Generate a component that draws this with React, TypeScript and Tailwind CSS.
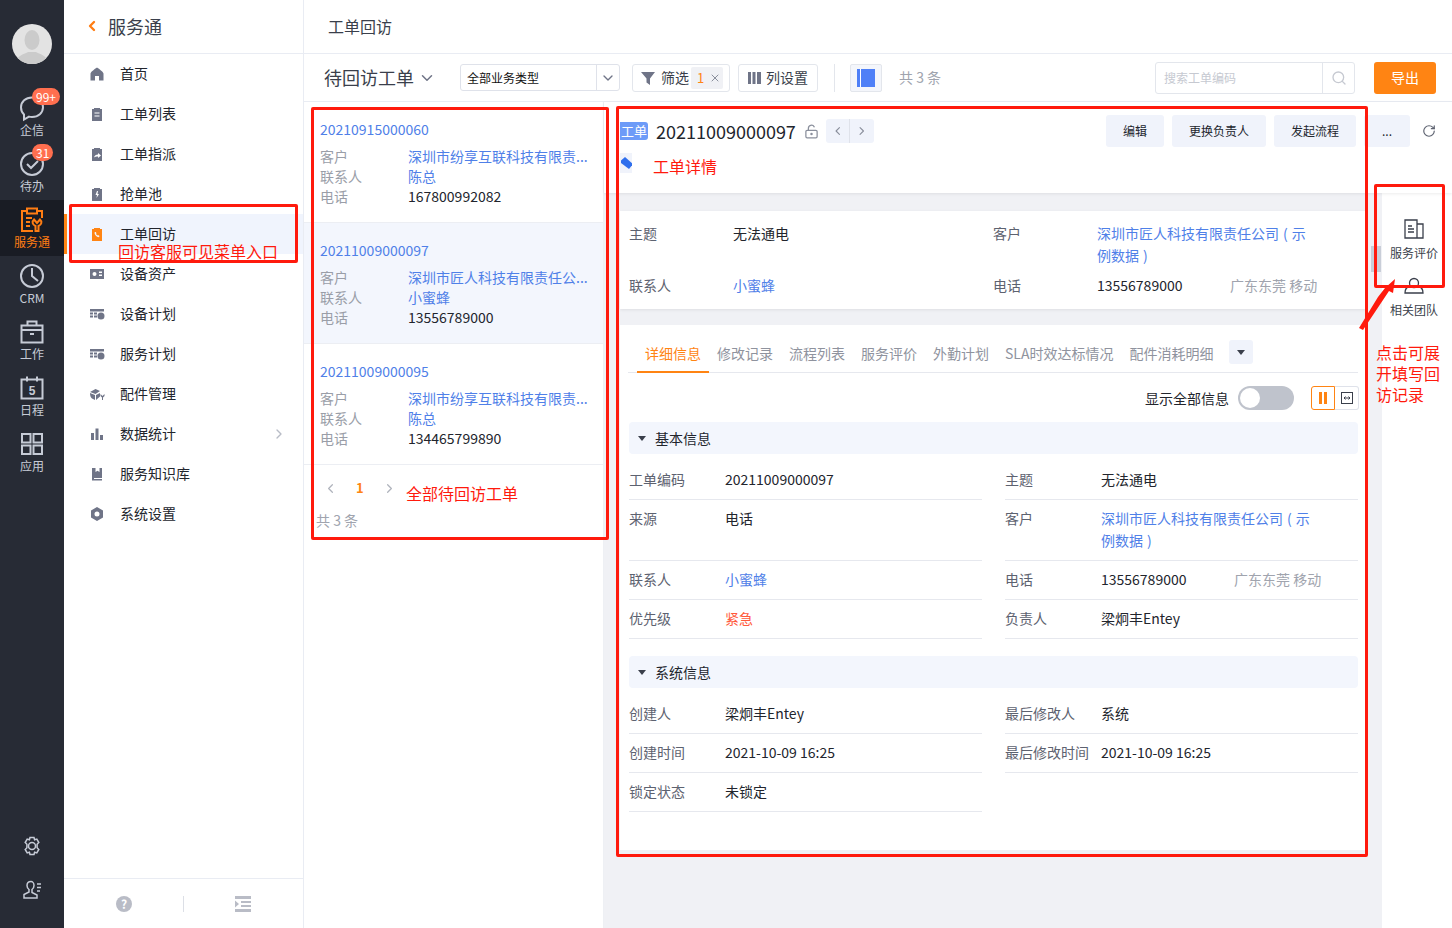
import React from 'react';
import { ChevronDown, ChevronLeft, ChevronRight, Search, RotateCw, LockKeyholeOpen, X } from 'lucide-react';

const railItems = [
  { label: '企信', icon: 'chat', badge: '99+' },
  { label: '待办', icon: 'todo', badge: '31' },
  { label: '服务通', icon: 'service', active: true },
  { label: 'CRM', icon: 'crm' },
  { label: '工作', icon: 'work' },
  { label: '日程', icon: 'date' },
  { label: '应用', icon: 'apps' },
];

function RailIcon({ name, color }: { name: string; color: string }) {
  const p = { fill: 'none', stroke: color, strokeWidth: 2 };
  return (
    <svg width="28" height="28" viewBox="0 0 28 28">
      {name === 'chat' && <path d="M14 3.500c6.400 0 11 4.300 11 9.800s-4.600 9.700-11 9.700c-1 0-2-.1-3-.4L6 25.500v-5C4 18.700 3 16.200 3 13.300 3 7.800 7.600 3.500 14 3.500z" {...p} />}
      {name === 'todo' && <g {...p}><circle cx="14" cy="14" r="11" /><path d="M9 14l4 4 7-7" /></g>}
      {name === 'service' && (
        <g {...p}>
          <path d="M9 5H4v20h11M19 5h5v7" />
          <rect x="9" y="2.500" width="10" height="5" />
          <path d="M8 12h6M8 16h4M8 20h4" />
          <path d="M16 13.500l3 3.500 3-3.500c2.500 2 1.500 5.500-1.500 6.500v5h-3v-5c-3-1-4-4.500-1.500-6.500z" />
        </g>
      )}
      {name === 'crm' && <g {...p}><circle cx="14" cy="14" r="11" /><path d="M14 6v8l6 5" /></g>}
      {name === 'work' && <g {...p}><rect x="3.500" y="7.500" width="21" height="17" /><path d="M9.500 7.500V3.500h9v4M3.500 12h21M12 16h4" /></g>}
      {name === 'date' && (
        <g {...p}>
          <rect x="3.500" y="5.500" width="21" height="19" />
          <path d="M9 2.500v5M19 2.500v5" />
          <text x="14" y="21" textAnchor="middle" fontSize="12" fontWeight="700" fill={color} stroke="none" fontFamily="Liberation Sans">5</text>
        </g>
      )}
      {name === 'apps' && (
        <g {...p}>
          <rect x="4" y="4" width="8.500" height="8.500" />
          <rect x="15.500" y="4" width="8.500" height="8.500" />
          <rect x="4" y="15.500" width="8.500" height="8.500" />
          <rect x="15.500" y="15.500" width="8.500" height="8.500" />
        </g>
      )}
    </svg>
  );
}

function MenuIcon({ name, color = '#6f7487' }: { name: string; color?: string }) {
  return (
    <svg width="16" height="16" viewBox="0 0 16 16" fill={color}>
      {name === 'home' && <path d="M8 1.500c1.500 1 6 4 6.500 6v7H10V10H6v4.500H1.500v-7C2 5.500 6.500 2.500 8 1.500z" />}
      {name === 'list' && <path fillRule="evenodd" d="M3 3h2V2h6v1h2v12H3zM5.500 6.500v1h5v-1zm0 3v1h5v-1z" />}
      {name === 'assign' && <path fillRule="evenodd" d="M3 3h2V2h6v1h2v12H3zM5 11.500c.5-2 2-3 4-3V7l3 2.500L9 12v-1.500c-1.500 0-3 0-4 1z" />}
      {name === 'pool' && <path fillRule="evenodd" d="M3 3h2V2h6v1h2v12H3zM8 5L6.500 9H8l-.5 3L10 8H8.500L9 5z" />}
      {name === 'visit' && <path fillRule="evenodd" d="M3 3h2V2h6v1h2v12H3zM6 6c-.8.500-.5 2 .5 3.300S9 11.500 10 11l.5-1-1.500-1-.7.500-1.300-1.500.5-.8L6.800 6z" />}
      {name === 'asset' && <path fillRule="evenodd" d="M1 3h14v10H1zM5.500 6a2 2 0 100 4 2 2 0 000-4zM10 5.500v1.500h3V5.500zm0 3v1.500h3V8.500z" />}
      {name === 'plan' && <path fillRule="evenodd" d="M1 3h14v2.500H1zM1 6.500h3v2H1zM5 6.500h3v2H5zM1 9.500h3v2H1zM5 9.500h3v2H5zM12 6.500a3.500 3.500 0 110 7 3.500 3.500 0 010-7z" />}
      {name === 'part' && <path d="M1 6l5.500-3L11 5 6.500 8zM1 7l5 2v5l-3-1.500C1.500 11.500 1 9 1 7zM7 9l4-2v3.500L7 14zM11.500 8l2 2 2-2v2l-1.500 1.500V14h-1v-2.500L11.500 10z" />}
      {name === 'stat' && <path d="M2 7h3v7H2zM6.500 2.500h3V14h-3zM11 9h3v5h-3z" />}
      {name === 'book' && <path d="M3 2h10v10H5v1h8v1.500H3zM6.500 2v4l2-1.200L10.500 6V2z" />}
      {name === 'gear' && <path fillRule="evenodd" d="M8 1l6 3.500v7L8 15l-6-3.500v-7zM8 5.500a2.500 2.500 0 100 5 2.500 2.500 0 000-5z" />}
    </svg>
  );
}

const menu = [
  { label: '首页', icon: 'home' },
  { label: '工单列表', icon: 'list' },
  { label: '工单指派', icon: 'assign' },
  { label: '抢单池', icon: 'pool' },
  { label: '工单回访', icon: 'visit', active: true },
  { label: '设备资产', icon: 'asset' },
  { label: '设备计划', icon: 'plan' },
  { label: '服务计划', icon: 'plan' },
  { label: '配件管理', icon: 'part' },
  { label: '数据统计', icon: 'stat', more: true },
  { label: '服务知识库', icon: 'book' },
  { label: '系统设置', icon: 'gear' },
];

const orders = [
  { no: '20210915000060', customer: '深圳市纷享互联科技有限责...', contact: '陈总', phone: '167800992082' },
  { no: '20211009000097', customer: '深圳市匠人科技有限责任公...', contact: '小蜜蜂', phone: '13556789000', active: true },
  { no: '20211009000095', customer: '深圳市纷享互联科技有限责...', contact: '陈总', phone: '134465799890' },
];

const tabs = ['修改记录', '流程列表', '服务评价', '外勤计划', 'SLA时效达标情况', '配件消耗明细'];

// hair spaces around the brackets, the source renders them wider than a plain space
const customerName = '深圳市匠人科技有限责任公司 \u200a( \u200a示例数据 \u200a)';

function Sidebar() {
  return (
    <div className="w-[64px] shrink-0 bg-[#272b35] flex flex-col items-center">
      <div className="mt-[24px] mb-[24px] w-[40px] h-[40px] rounded-full bg-[#e3e3e3] overflow-hidden">
        <svg width="40" height="40" viewBox="0 0 40 40">
          <ellipse cx="20" cy="16" rx="7.500" ry="10" fill="#cbcbcb" />
          <path d="M4 40c0-9 9-10 12-12h8c3 2 12 3 12 12z" fill="#cbcbcb" />
        </svg>
      </div>
      <div className="flex flex-col w-full">
        {railItems.map((item) => (
          <div
            key={item.label}
            className={`relative h-[56px] pb-[2px] flex flex-col items-center justify-center ${item.active ? 'bg-[#191c24]' : ''}`}
          >
            <div className="mb-[1px]"><RailIcon name={item.icon} color={item.active ? '#ff7d13' : '#c6cbd6'} /></div>
            <span className={`text-[12px] leading-[14px] ${item.active ? 'text-[#ff7d13]' : 'text-[#c6cbd6]'}`}>{item.label}</span>
            {item.badge && (
              <span className="absolute top-0 left-[32px] h-[17px] px-[4px] min-w-[17px] text-center rounded-full bg-[#ff6f4f] text-white text-[12px] leading-[17px]">
                {item.badge}
              </span>
            )}
          </div>
        ))}
      </div>
      <div className="mt-auto flex flex-col items-center gap-[24px] mb-[28px] text-[#c6cbd6]">
        <svg width="20" height="20" viewBox="0 0 20 20" fill="none" stroke="currentColor" strokeWidth="1.500">
          <path d="M8 1.500h4l.6 2.300 2.200-.7 2 3.400-1.700 1.700v3.600l1.700 1.700-2 3.400-2.200-.7-.6 2.300H8l-.6-2.300-2.200.7-2-3.400 1.700-1.700V8.200L3.200 6.500l2-3.400 2.200.7z" />
          <circle cx="10" cy="10" r="3.500" />
        </svg>
        <svg width="20" height="20" viewBox="0 0 20 20" fill="none" stroke="currentColor" strokeWidth="1.500">
          <path d="M9 1.500c-2.500 0-4 1.800-4 4 0 2 1 3.300 2 4v2.500l-5 2.500v3.500h13V15l-5-2.500V9.500c1-.7 2-2 2-4 0-2.200-1.500-4-3-4z" />
          <path d="M15 4h4M15 7.500h4M15 11h3" />
        </svg>
      </div>
    </div>
  );
}

function SubMenu() {
  return (
    <div className="relative w-[240px] shrink-0 bg-white border-r border-[#e9ecf3] flex flex-col">
      <div className="h-[54px] shrink-0 flex items-center pl-[20px] pb-[1px] border-b border-[#e9ecf3]">
        <ChevronLeft size={16} strokeWidth={3.500} className="text-[#ff7d13]" />
        <span className="ml-[8px] text-[18px] text-[#3a3f4b]">服务通</span>
      </div>
      <div className="flex flex-col">
        {menu.map((m) => (
          <div key={m.label} className={`relative h-[40px] flex items-center pl-[25px] pr-[16px] ${m.active ? 'bg-[#f0f4fd]' : ''}`}>
            {m.active && <span className="absolute left-0 top-0 w-[3px] h-full bg-[#ff8413]" />}
            <MenuIcon name={m.icon} color={m.active ? '#ff8413' : '#6f7487'} />
            <span className="ml-[15px] text-[14px] leading-[20px] mb-[3px] text-[#22252d]">{m.label}</span>
            {m.more && <ChevronRight size={16} className="ml-auto text-[#b8bcc6]" />}
          </div>
        ))}
      </div>
      <div className="mt-auto h-[50px] border-t border-[#e9ecf3] flex items-center justify-center">
        <div className="w-[16px] h-[16px] rounded-full bg-[#b9bcc6] text-white text-[12px] leading-[16px] text-center font-bold">?</div>
        <div className="mx-[51px] w-px h-[16px] bg-[#dcdfe6]" />
        <svg width="16" height="16" viewBox="0 0 16 16" fill="#b9bcc6">
          <path d="M0 0h16v3H0zM0 13h16v3H0zM6 5h10v2H6zM6 9h10v2H6zM0 4.500L4 8l-4 3.500z" />
        </svg>
      </div>
    </div>
  );
}

function Toolbar() {
  return (
    <div className="h-[48px] shrink-0 flex items-center bg-white border-b border-[#e9ecf3] pl-[20px] pr-[16px]">
      <span className="text-[18px] text-[#3a3f4b]">待回访工单</span>
      <ChevronDown size={18} className="ml-[4px] text-[#6f7487]" />
      <div className="ml-[24px] w-[160px] h-[27px] border border-[#dfe2ea] rounded-[3px] flex items-center">
        <span className="flex-1 pl-[6px] text-[12px] text-[#111]">全部业务类型</span>
        <div className="w-[22px] h-full border-l border-[#dfe2ea] flex items-center justify-center shrink-0 ml-[4px] mr-[1px]">
          <ChevronDown size={16} className="text-[#6f7487]" />
        </div>
      </div>
      <div className="ml-[12px] w-[98px] h-[28px] border border-[#e3e6ec] rounded-[3px] flex items-center pl-[8px] text-[14px] text-[#3a3f4b]">
        <svg width="14" height="14" viewBox="0 0 14 14" fill="#6f7487"><path d="M0 1h14L9 7.500V14L5.500 11.500V7.500z" /></svg>
        <span className="ml-[6px]">筛选</span>
        <span className="ml-[2px] h-[22px] pl-[6px] pr-[2px] bg-[#f0f1f5] rounded-[2px] flex items-center text-[13px] text-[#ff8413]">
          1<X size={12} className="ml-[5px] text-[#8a8f9c]" />
        </span>
      </div>
      <div className="ml-[8px] w-[80px] h-[28px] border border-[#e3e6ec] rounded-[3px] flex items-center justify-center text-[14px] text-[#3a3f4b]">
        <svg width="14" height="14" viewBox="0 0 14 14" fill="#6f7487"><path d="M0 1h3v12H0zM4.500 1h3v12h-3zM9 1h4v12H9z" /></svg>
        <span className="ml-[4px]">列设置</span>
      </div>
      <div className="ml-[16px] mr-[15px] w-px h-[28px] bg-[#e3e6ec]" />
      <div className="w-[32px] h-[28px] border border-[#e3e6ec] rounded-[2px] bg-[#f4f6fb] flex items-center justify-center">
        <svg width="18" height="18" viewBox="0 0 18 18"><rect width="18" height="18" fill="#4f80f7" /><rect x="3" width="1" height="18" fill="#fff" /></svg>
      </div>
      <span className="ml-[17px] text-[14px] text-[#a0a4ae]">共 3 条</span>
      <div className="ml-auto w-[200px] h-[32px] border border-[#e3e6ec] rounded-[3px] flex items-center">
        <span className="flex-1 pl-[8px] text-[12px] text-[#c6c9d1]">搜索工单编码</span>
        <div className="w-[32px] h-full border-l border-[#e3e6ec] flex items-center justify-center">
          <Search size={16} className="text-[#c6c9d1]" />
        </div>
      </div>
      <button className="ml-[19px] w-[62px] h-[32px] rounded-[3px] bg-[#ff8413] text-white text-[14px]">导出</button>
    </div>
  );
}

function OrderList() {
  return (
    <div className="w-[300px] shrink-0 bg-white border-r border-[#eef0f4]">
      {orders.map((o) => (
        <div key={o.no} className={`h-[121px] pt-[17px] pl-[16px] pr-[16px] border-b border-[#eceef3] ${o.active ? 'bg-[#f3f6fd]' : ''}`}>
          <div className="text-[14px] leading-[20px] text-[#4f80e8]">{o.no}</div>
          <div className="mt-[7px] text-[14px] leading-[20px]">
            <div className="flex"><span className="w-[88px] shrink-0 text-[#9a9ea8]">客户</span><span className="whitespace-nowrap text-[#4f80e8]">{o.customer}</span></div>
            <div className="flex"><span className="w-[88px] shrink-0 text-[#9a9ea8]">联系人</span><span className="text-[#4f80e8]">{o.contact}</span></div>
            <div className="flex"><span className="w-[88px] shrink-0 text-[#9a9ea8]">电话</span><span className="text-[#22252d]">{o.phone}</span></div>
          </div>
        </div>
      ))}
      <div className="flex items-center h-[46px] pl-[19px] text-[#b0b4bd]">
        <ChevronLeft size={15} />
        <span className="ml-[18px] text-[13px] font-bold text-[#ff8413]">1</span>
        <ChevronRight size={15} className="ml-[18px]" />
      </div>
      <div className="pl-[12px] mt-[-1px] text-[14px] text-[#a0a4ae]">共 3 条</div>
    </div>
  );
}

function Row({ label, children, h = 'h-[39px]' }: { label: string; children: React.ReactNode; h?: string }) {
  return (
    <div className={`${h} pt-[7px] border-b border-[#e6e8ee]`}>
      <div className="flex text-[14px] leading-[22px]">
        <span className="w-[96px] shrink-0 text-[#5d6270]">{label}</span>
        <div className="flex-1 text-[#22252d]">{children}</div>
      </div>
    </div>
  );
}

function SectionTitle({ title }: { title: string }) {
  return (
    <div className="h-[32px] rounded-[4px] bg-[#f3f6fd] flex items-center pl-[9px] text-[14px] text-[#22252d]">
      <span className="w-0 h-0 border-x-[4px] border-x-transparent border-t-[5px] border-t-[#3a3f4b]" />
      <span className="ml-[9px]">{title}</span>
    </div>
  );
}

function Detail() {
  return (
    <div className="flex-1 min-w-0 flex flex-col bg-[#f0f1f5]">
      <div className="h-[91px] shrink-0 bg-white flex shadow-[0_1px_3px_rgba(0,0,0,0.08)] z-10">
        <div className="flex-1 pl-[16px] pt-[17px] pr-[12px] flex flex-col">
          <div className="flex items-center h-[24px]">
            <span className="w-[28px] h-[18px] rounded-r-[3px] bg-[#6d9bf8] text-white text-[13px] leading-[18px] text-center">工单</span>
            <span className="ml-[8px] text-[18px] text-[#22252d]">20211009000097</span>
            <LockKeyholeOpen size={15} className="ml-[8px] text-[#8a8f9c]" />
            <div className="ml-[7px] w-[48px] h-[24px] rounded-[3px] bg-[#f0f3fb] flex items-center text-[#8a8f9c]">
              <ChevronLeft size={14} className="mx-[5px]" />
              <span className="w-px h-[24px] bg-[#dfe2ea]" />
              <ChevronRight size={14} className="mx-[5px]" />
            </div>
            <div className="ml-auto flex gap-[8px] text-[12px] text-[#22252d]">
              <span className="h-[32px] w-[58px] rounded-[3px] bg-[#f0f3fb] flex items-center justify-center">编辑</span>
              <span className="h-[32px] w-[94px] rounded-[3px] bg-[#f0f3fb] flex items-center justify-center">更换负责人</span>
              <span className="h-[32px] w-[82px] rounded-[3px] bg-[#f0f3fb] flex items-center justify-center">发起流程</span>
              <span className="h-[32px] w-[46px] rounded-[3px] bg-[#f0f3fb] flex items-center justify-center">...</span>
              <span className="h-[32px] w-[22px] flex items-center justify-center"><RotateCw size={14} className="text-[#5d6270]" /></span>
            </div>
          </div>
          <div className="mt-[10px] w-[12px] h-[20px] bg-[#f0f3fb] flex items-center overflow-hidden">
            <svg className="shrink-0" width="14" height="14" viewBox="0 0 14 14" fill="#2f6fed"><path d="M1 4.500L5 1l8 7-4 5-8-6z" /></svg>
          </div>
        </div>
      </div>
      <div className="flex flex-1 min-h-0">
        <div className="flex-1 min-w-0 pt-[18px] pl-[16px] pr-[16px]">
          <div className="h-[98px] bg-white shadow-[0_1px_3px_rgba(0,0,0,0.08)] pl-[9px] pt-[11px] grid grid-cols-[364px_1fr] content-start text-[14px] leading-[22px]">
            <div className="flex"><span className="w-[104px] text-[#5d6270]">主题</span><span className="text-[#22252d]">无法通电</span></div>
            <div className="flex"><span className="w-[104px] shrink-0 text-[#5d6270]">客户</span><span className="w-[216px] text-[#4f80e8]">{customerName}</span></div>
            <div className="flex mt-[8px]"><span className="w-[104px] text-[#5d6270]">联系人</span><span className="text-[#4f80e8]">小蜜蜂</span></div>
            <div className="flex mt-[8px]"><span className="w-[104px] text-[#5d6270]">电话</span><span className="w-[133px] text-[#22252d]">13556789000</span><span className="text-[#a0a4ae]">广东东莞 移动</span></div>
          </div>
          <div className="mt-[16px] h-[525px] bg-white pl-[9px] pr-[8px] pt-[15px]">
            <div className="flex items-start h-[33px] border-b border-[#e6e8ee] text-[14px] leading-[27px] text-[#8f939e] ml-[-1px]">
              <span className="h-[33px] w-[72px] ml-[9px] text-center text-[#ff8413] border-b-2 border-[#ff8413]">详细信息</span>
              <div className="flex gap-[16px] ml-[8px]">
                {tabs.map((t) => <span key={t} className="whitespace-nowrap">{t}</span>)}
              </div>
              <span className="ml-[15px] w-[24px] h-[24px] rounded-[3px] bg-[#f0f3fb] flex items-center justify-center">
                <span className="w-0 h-0 border-x-[4px] border-x-transparent border-t-[5px] border-t-[#3a3f4b]" />
              </span>
            </div>
            <div className="flex items-center justify-end h-[24px] mt-[13px] mr-[-1px] text-[14px] text-[#22252d]">
              <span>显示全部信息</span>
              <span className="ml-[9px] w-[56px] h-[24px] rounded-full bg-[#bfc3cc] p-[2px]"><span className="block w-[20px] h-[20px] rounded-full bg-white" /></span>
              <span className="ml-[17px] w-[24px] h-[24px] border border-[#ff8413] rounded-l-[3px] flex items-center justify-center gap-[2px]">
                <span className="w-[3px] h-[12px] bg-[#ff8413]" /><span className="w-[3px] h-[12px] bg-[#ff8413]" />
              </span>
              <span className="w-[24px] h-[24px] border border-l-0 border-[#dfe2ea] rounded-r-[3px] flex items-center justify-center">
                <svg width="12" height="12" viewBox="0 0 12 12" fill="none" stroke="#3a3f4b"><rect x="0.500" y="0.500" width="11" height="11" /><path d="M3 6h6M4.500 4.500L3 6l1.500 1.500M7.500 4.500L9 6 7.500 7.500" /></svg>
              </span>
            </div>
            <div className="mt-[12px]"><SectionTitle title="基本信息" /></div>
            <div className="grid grid-cols-2 gap-x-[23px] mt-[7px]">
              <Row label="工单编码">20211009000097</Row>
              <Row label="主题">无法通电</Row>
              <Row label="来源" h="h-[61px]">电话</Row>
              <Row label="客户" h="h-[61px]"><span className="block w-[216px] text-[#4f80e8]">{customerName}</span></Row>
              <Row label="联系人"><span className="text-[#4f80e8]">小蜜蜂</span></Row>
              <Row label="电话">
                <span className="inline-block w-[133px]">13556789000</span><span className="text-[#a0a4ae]">广东东莞 移动</span>
              </Row>
              <Row label="优先级"><span className="text-[#ff5a3c]">紧急</span></Row>
              <Row label="负责人">梁炯丰Entey</Row>
            </div>
            <div className="mt-[17px]"><SectionTitle title="系统信息" /></div>
            <div className="grid grid-cols-2 gap-x-[23px] mt-[7px]">
              <Row label="创建人">梁炯丰Entey</Row>
              <Row label="最后修改人">系统</Row>
              <Row label="创建时间">2021-10-09 16:25</Row>
              <Row label="最后修改时间">2021-10-09 16:25</Row>
              <Row label="锁定状态">未锁定</Row>
            </div>
          </div>
        </div>
        <div className="relative w-[70px] shrink-0 bg-white flex flex-col items-center pt-[25px] pr-[6px] text-[12px] text-[#3a3f4b]">
          <span className="absolute left-[-11px] top-[53px] w-[10px] h-[26px] bg-[#c9ced8]" />
          <svg width="22" height="22" viewBox="0 0 22 22" fill="none" stroke="#3a3f4b" strokeWidth="1.300">
            <path d="M2 2h12v18H2zM14 6h6v14h-6M5 8h4M5 11h6M5 14h6" />
          </svg>
          <span className="mt-[4px] whitespace-nowrap">服务评价</span>
          <svg className="mt-[15px]" width="22" height="18" viewBox="0 0 22 18" fill="none" stroke="#3a3f4b" strokeWidth="1.300">
            <circle cx="11" cy="6" r="4.500" />
            <path d="M7 9c-4 1-5 3-5 7h18c0-4-1-6-5-7" />
          </svg>
          <span className="mt-[6px] whitespace-nowrap">相关团队</span>
        </div>
      </div>
    </div>
  );
}

function Annotations() {
  return (
    <div className="absolute inset-0 z-20 pointer-events-none">
      <div className="absolute left-[69px] top-[204px] w-[229px] h-[59px] border-[3px] border-[#ff1a0d] rounded-[2px]" />
      <span className="absolute left-[118px] top-[241px] text-[16px] leading-[20px] text-[#ff1a0d] whitespace-nowrap">回访客服可见菜单入口</span>
      <div className="absolute left-[311px] top-[107px] w-[298px] h-[433px] border-[3px] border-[#ff1a0d] rounded-[2px]" />
      <span className="absolute left-[406px] top-[483px] text-[16px] leading-[20px] text-[#ff1a0d] whitespace-nowrap">全部待回访工单</span>
      <div className="absolute left-[616px] top-[106px] w-[752px] h-[751px] border-[3px] border-[#ff1a0d] rounded-[2px]" />
      <span className="absolute left-[653px] top-[156px] text-[16px] leading-[20px] text-[#ff1a0d] whitespace-nowrap">工单详情</span>
      <div className="absolute left-[1374px] top-[184px] w-[71px] h-[104px] border-[3px] border-[#ff1a0d] rounded-[2px]" />
      <svg className="absolute left-[1356px] top-[276px]" width="44" height="56" viewBox="0 0 44 56" fill="#ff1a0d">
        <path d="M3 52L22 21l7-9L39 3l-2 14-4-2L7 54z" />
      </svg>
      <div className="absolute left-[1376px] top-[342px] w-[70px] text-[16px] leading-[21px] text-[#ff1a0d]">点击可展<br />开填写回<br />访记录</div>
    </div>
  );
}

export default function App() {
  return (
    <div className="relative w-[1452px] h-[928px] overflow-hidden flex bg-white text-[13px] font-['Noto_Sans_CJK_SC','Noto_Sans',sans-serif]">
      <Sidebar />
      <SubMenu />
      <div className="flex-1 min-w-0 flex flex-col">
        <div className="h-[54px] shrink-0 flex items-center pl-[24px] pb-[1px] border-b border-[#e9ecf3] text-[16px] text-[#3a3f4b]">工单回访</div>
        <Toolbar />
        <div className="flex flex-1 min-h-0">
          <OrderList />
          <Detail />
        </div>
      </div>
      <Annotations />
    </div>
  );
}
